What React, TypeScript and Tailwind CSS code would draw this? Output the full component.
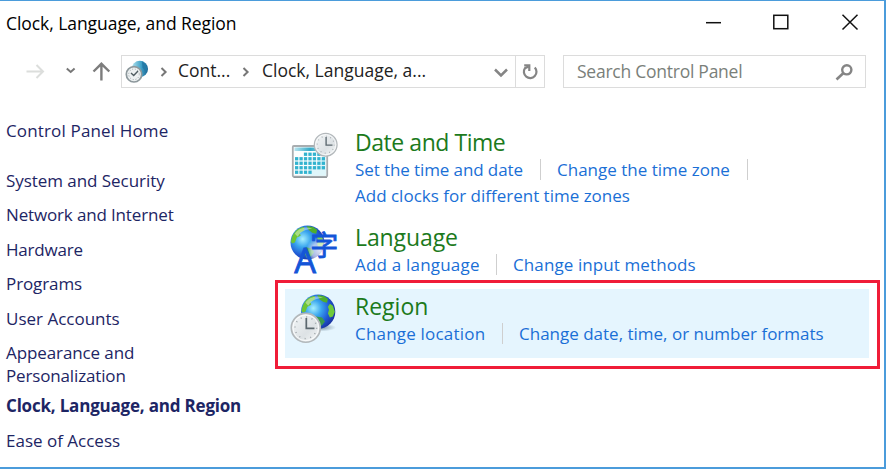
import React from 'react';

function Globe({ id }: { id: string }) {
  return (
    <g>
      <defs>
        <radialGradient id={id} cx="0.36" cy="0.4" r="0.68">
          <stop offset="0" stopColor="#a6f0ff" />
          <stop offset="0.35" stopColor="#3aa6ee" />
          <stop offset="0.7" stopColor="#2058d4" />
          <stop offset="1" stopColor="#18309c" />
        </radialGradient>
      </defs>
      <circle cx="18" cy="18" r="17.5" fill={`url(#${id})`} />
      <path d="M2 13C4 7 8 3 14 2l1 1-1 3-4 2 1 3-4 2-2 5-3 1-1-2z" fill="#6fc534" />
      <path d="M17 1l7 1 4 3-1 4-4-1-4-3z" fill="#4fae2c" />
      <path d="M30 10l3 2 2 6-2 5-3 1-2-4 1-4-1-3z" fill="#6fca3a" />
      <path d="M16 23l6 1 3 4-3 4-5 2-2-4-1-4z" fill="#3b9a50" />
      <path d="M5 9c4-6 12-8 18-5-6 0-12 2-15 8z" fill="#fff" opacity="0.4" />
    </g>
  );
}

function ClockFace({ id }: { id: string }) {
  return (
    <g>
      <defs>
        <linearGradient id={id} x1="0" y1="0" x2="1" y2="1">
          <stop offset="0" stopColor="#f4f7f8" />
          <stop offset="0.6" stopColor="#dde2e5" />
          <stop offset="1" stopColor="#f8fafa" />
        </linearGradient>
      </defs>
      <circle cx="15" cy="15" r="14.2" fill={`url(#${id})`} stroke="#b3b8bb" strokeWidth="1.6" />
      <circle cx="15" cy="15" r="12.6" fill="none" stroke="#fff" strokeWidth="0.8" />
      <circle cx="15" cy="15" r="10.6" fill="none" stroke="#a2a8ac" strokeWidth="1.4" strokeDasharray="1.1 4.45" />
      <path d="M15.5 5.5V15.5H23.5" fill="none" stroke="#5c686f" strokeWidth="1.7" />
    </g>
  );
}

function DateIcon() {
  const rows = [[2, 7], [0, 7], [0, 7], [0, 7], [0, 4]];
  return (
    <svg width="60" height="60" viewBox="0 0 60 60" className="block">
      <defs>
        <linearGradient id="calTop" x1="0" x2="1">
          <stop offset="0" stopColor="#b7e3ee" />
          <stop offset="0.5" stopColor="#35abc8" />
          <stop offset="1" stopColor="#9fd9e6" />
        </linearGradient>
      </defs>
      <rect x="7.8" y="21" width="34.4" height="30.6" rx="1" fill="#fbfefe" stroke="#a8adb0" strokeWidth="1.8" />
      <path d="M8.5 52.3H42" stroke="#858b8f" strokeWidth="1" />
      <path d="M41 30L41 50.7 20 50.7z" fill="#dff6fa" />
      <rect x="9.5" y="22.5" width="31" height="3.5" fill="url(#calTop)" />
      {rows.map(([from, to], r) =>
        Array.from({ length: to - from }, (_, i) => (
          <rect key={`${r}-${i}`} x={10 + (from + i) * 4.45} y={27.6 + r * 4.5} width="3.3" height="3.3" fill="#32b3cf" />
        ))
      )}
      <g transform="translate(28.7 7.7) scale(.8)">
        <ClockFace id="clockDate" />
      </g>
    </svg>
  );
}

function LanguageIcon() {
  return (
    <svg width="60" height="60" viewBox="0 0 60 60" className="block overflow-visible">
      <defs>
        <radialGradient id="langHaze">
          <stop offset="0" stopColor="#fff" stopOpacity="0.85" />
          <stop offset="0.6" stopColor="#fff" stopOpacity="0.6" />
          <stop offset="1" stopColor="#fff" stopOpacity="0" />
        </radialGradient>
      </defs>
      <g transform="translate(5 5) scale(.97)">
        <Globe id="globeLang" />
      </g>
      <circle cx="35" cy="31" r="14" fill="url(#langHaze)" />
      <text x="9.2" y="52.5" fontSize="34.5" fill="#1455d8" stroke="#1455d8" strokeWidth="0.8" className="font-['Open_Sans',sans-serif]">A</text>
      <text x="25.3" y="36.2" fontSize="28" fill="#1455d8" stroke="#1455d8" strokeWidth="0.8" className="font-['Noto_Sans_CJK_SC',sans-serif]">字</text>
    </svg>
  );
}

function RegionIcon() {
  return (
    <svg width="60" height="60" viewBox="0 0 60 60" className="block">
      <defs>
        <radialGradient id="regionShade">
          <stop offset="0" stopColor="#49657a" stopOpacity="0.7" />
          <stop offset="1" stopColor="#49657a" stopOpacity="0" />
        </radialGradient>
      </defs>
      <ellipse cx="36" cy="39.5" rx="15" ry="4" fill="url(#regionShade)" />
      <g transform="translate(15.5 6) scale(.98)">
        <Globe id="globeRegion" />
      </g>
      <g transform="translate(5.5 24.5) scale(1.02)">
        <ClockFace id="clockRegion" />
      </g>
    </svg>
  );
}

function AddressIcon() {
  return (
    <svg width="24" height="24" viewBox="0 0 24 24" className="block">
      <defs>
        <linearGradient id="addrGlobe" x1="0" x2="1">
          <stop offset="0" stopColor="#b5e5f0" />
          <stop offset="0.6" stopColor="#3d9fc6" />
          <stop offset="1" stopColor="#1a6290" />
        </linearGradient>
      </defs>
      <circle cx="14.8" cy="9" r="8.2" fill="url(#addrGlobe)" />
      <path d="M17 1.5l4 3 1.5 5-2 2-3-4z" fill="#247ba8" />
      <circle cx="9" cy="14.3" r="7.7" fill="#edf1f2" stroke="#8d989c" strokeWidth="1.7" />
      <circle cx="9" cy="14.3" r="5.3" fill="none" stroke="#9ea7aa" strokeWidth="1" strokeDasharray="1 1.8" />
      <path d="M6 13l2.7 2.5L13 11" fill="none" stroke="#4f5c61" strokeWidth="1.4" />
    </svg>
  );
}

function Chevron() {
  return (
    <svg width="8" height="12" viewBox="0 0 8 12" className="block shrink-0">
      <path d="M1.5 2L5.6 6 1.5 10" fill="none" stroke="#777" strokeWidth="2" />
    </svg>
  );
}

function TitleBar() {
  return (
    <div className="flex h-[44px] items-start justify-between pl-[6px] text-black">
      <h1 className="mt-[10px] text-[17.5px] leading-[24px] tracking-[-0.06px]">Clock, Language, and Region</h1>
      <svg width="180" height="44" viewBox="704 1 180 44" className="block" fill="none" stroke="#111" strokeWidth="1.5">
        <path d="M706 22.7H721" />
        <rect x="773.8" y="15.3" width="14" height="13.4" />
        <path d="M842.5 14.8L857.5 29.5M857.5 14.8L842.5 29.5" />
      </svg>
    </div>
  );
}

function AddressBar() {
  return (
    <div className="ml-[24px] flex h-[33px] items-stretch">
      <svg width="97" height="33" viewBox="24 55 97 33" className="block" fill="none">
        <path d="M26.5 71.5H43M36.5 65L43 71.5 36.5 78" stroke="#dcdedc" strokeWidth="2" />
        <path d="M66.8 68.5L70.7 72 74.6 68.5" stroke="#777" strokeWidth="2" />
        <path d="M101.4 80.5V64.5M93.5 71.5L101.4 63.8 109.3 71.5" stroke="#7d7d7d" strokeWidth="2.4" />
      </svg>
      <div className="flex w-[424px] border border-[#dcdcdc] text-[17.5px] text-[#222]">
        <div className="flex w-[393px] items-center pl-[3px]">
          <AddressIcon />
          <div className="ml-[11px]"><Chevron /></div>
          <span className="-mt-[3px] ml-[10px] w-[52px] whitespace-nowrap">Cont...</span>
          <div className="ml-[12px]"><Chevron /></div>
          <span className="-mt-[3px] ml-[12px] whitespace-nowrap">Clock, Language, a...</span>
          <svg width="16" height="12" viewBox="0 0 16 12" className="mr-[6px] ml-auto mt-[3px] block" fill="none">
            <path d="M2 2.5L8 8.5 14 2.5" stroke="#858585" strokeWidth="2.5" />
          </svg>
        </div>
        <div className="flex flex-1 items-center justify-center border-l border-[#dcdcdc]">
          <svg width="18" height="20" viewBox="0 0 18 20" className="block" fill="none" stroke="#858585" strokeWidth="2.2">
            <path d="M13.8 5.5A6.3 6.3 0 1 1 4 6.2L7.6 4.4" />
            <path d="M3.2 3.4H8.3V9" />
          </svg>
        </div>
      </div>
      <div className="ml-[18px] flex w-[303px] items-center justify-between border border-[#dcdcdc] pr-[11px] pl-[13px] text-[17.5px] text-[#7a7f7a]">
        <span className="tracking-[-0.25px]">Search Control Panel</span>
        <svg width="20" height="20" viewBox="0 0 20 20" className="block" fill="none" stroke="#858585">
          <circle cx="12.8" cy="7.8" r="4.6" strokeWidth="2.4" />
          <path d="M9.2 11.2L2.5 17.5" strokeWidth="2.6" />
        </svg>
      </div>
    </div>
  );
}

function Sidebar() {
  return (
    <nav className="w-[269px] pt-[32px] pl-[6px] text-[17px] leading-[22.5px] text-[#1d2564]">
      <p className="tracking-[0.15px]">Control Panel Home</p>
      <ul className="mt-[27px] flex flex-col gap-[12px]">
        <li className="tracking-[-0.05px]">System and Security</li>
        <li className="tracking-[-0.15px]">Network and Internet</li>
        <li className="tracking-[-0.2px]">Hardware</li>
        <li className="tracking-[-0.1px]">Programs</li>
        <li>User Accounts</li>
        <li><span className="tracking-[-0.1px]">Appearance and</span><br /><span className="tracking-[-0.15px]">Personalization</span></li>
        <li className="-mt-[4px] font-bold tracking-[-0.2px]">Clock, Language, and Region</li>
        <li>Ease of Access</li>
      </ul>
    </nav>
  );
}

function Divider() {
  return <span className="block h-[21px] w-px shrink-0 bg-[#cfcfcf]" />;
}

function Content() {
  return (
    <main className="flex w-[605px] flex-col whitespace-nowrap text-[17px] leading-[25px] text-[#1a6fd6]">
      <section className="mt-[37px] ml-[10px] flex h-[95px]">
        <DateIcon />
        <div className="ml-[10px]">
          <h2 className="h-[31px] text-[23px] leading-[34px] tracking-[-0.45px] text-[#1c7a1c]">Date and Time</h2>
          <div className="flex h-[26px] items-center">
            <a className="w-[185px] tracking-[-0.1px]">Set the time and date</a>
            <Divider />
            <a className="ml-[16px] w-[190px]">Change the time zone</a>
            <Divider />
          </div>
          <a className="mt-px block">Add clocks for different time zones</a>
        </div>
      </section>
      <section className="ml-[10px] flex h-[60px]">
        <LanguageIcon />
        <div className="ml-[10px]">
          <h2 className="h-[31px] text-[23px] leading-[34px] tracking-[-0.1px] text-[#1c7a1c]">Language</h2>
          <div className="flex h-[26px] items-center">
            <a className="w-[141px] tracking-[0.2px]">Add a language</a>
            <Divider />
            <a className="ml-[16px] tracking-[0.1px]">Change input methods</a>
          </div>
        </div>
      </section>
      <section className="h-[89px] border-[3px] border-[#f01c38] pt-[6px] pr-[8px] pl-[7px]">
        <div className="flex h-[69px] bg-[#e5f5fe]">
          <div className="-mt-px"><RegionIcon /></div>
          <div className="ml-[10px]">
            <h2 className="h-[31px] text-[23px] leading-[34px] text-[#1c7a1c]">Region</h2>
            <div className="flex h-[26px] items-center">
              <a className="w-[147px] tracking-[0.2px]">Change location</a>
              <Divider />
              <a className="ml-[16px]">Change date, time, or number formats</a>
            </div>
          </div>
        </div>
      </section>
    </main>
  );
}

export default function App() {
  return (
    <div className="h-[469px] w-[886px] overflow-hidden border-t border-r-2 border-b-2 border-[#4b9cdb] bg-white font-['Open_Sans','Noto_Sans',sans-serif]">
      <TitleBar />
      <div className="mt-[10px]"><AddressBar /></div>
      <div className="flex">
        <Sidebar />
        <div className="ml-[6px]"><Content /></div>
      </div>
    </div>
  );
}
